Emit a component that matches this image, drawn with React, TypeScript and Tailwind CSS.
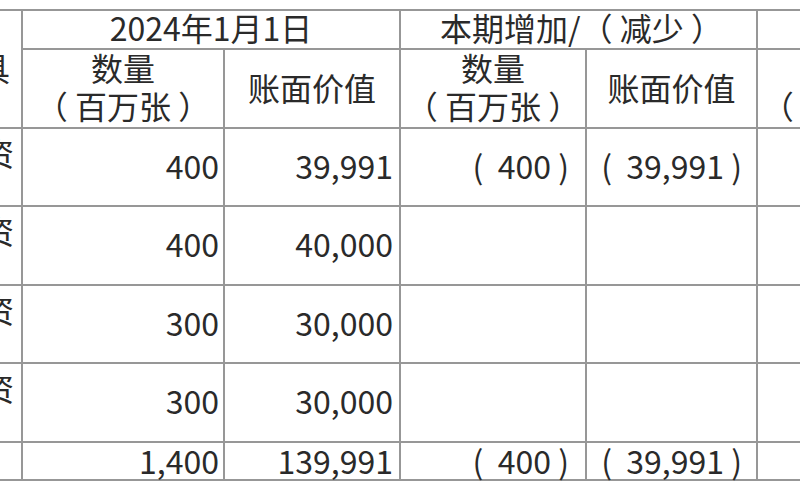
const rows = [
  { label: "永续中票投资", qty: "400", value: "39,991", dQty: "(  400 )", dValue: "(  39,991 )" },
  { label: "永续公司债投资", qty: "400", value: "40,000", dQty: "", dValue: "" },
  { label: "二级资本债投资", qty: "300", value: "30,000", dQty: "", dValue: "" },
  { label: "次级债投资", qty: "300", value: "30,000", dQty: "", dValue: "" },
];

const cell = "bg-white flex items-center";

function QtyHead() {
  return (
    <div className={`${cell} flex-col justify-center pb-[5px]`}>
      <span>数量</span>
      <span className="whitespace-pre">（ 百万张 ）</span>
    </div>
  );
}

export default function App() {
  return (
    <div
      className="w-[800px] h-[500px] overflow-hidden bg-white text-[#2a2a2a] text-[32px] leading-[38px]"
      style={{ fontFamily: '"Noto Sans CJK SC", "Noto Sans", sans-serif' }}
    >
      <div className="mt-[9px] ml-[-239px] w-max grid grid-cols-[260px_200px_174px_184px_169px_182px_180px] grid-rows-[37px_77px_76px_77px_76px_77px_36px] gap-[2px] py-[2px] bg-[#979797]">
        {/* header */}
        <div className={`${cell} row-span-2 justify-end pr-[11px] pb-[4px]`}>金融工具</div>
        <div className={`${cell} col-span-2 justify-center pb-[5px]`}>2024年1月1日</div>
        <div className={`${cell} col-span-2 justify-center pb-[5px] pl-[6px] whitespace-pre`}>本期增加/（ 减少 ）</div>
        <div className={`${cell} col-span-2 justify-center pb-[5px]`}>2024年12月31日</div>

        <QtyHead />
        <div className={`${cell} justify-center pb-[4px]`}>账面价值</div>
        <QtyHead />
        <div className={`${cell} justify-center pb-[4px]`}>账面价值</div>
        <QtyHead />
        <div className={`${cell} justify-center pb-[4px]`}>账面价值</div>

        {/* body */}
        {rows.map((r) => (
          <div key={r.label} className="contents">
            <div className="bg-white flex justify-end items-start pt-[4px] pr-[7px]">{r.label}</div>
            <div className={`${cell} justify-end pr-[4px] pb-[5px]`}>{r.qty}</div>
            <div className={`${cell} justify-end pr-[6px] pb-[5px]`}>{r.value}</div>
            <div className={`${cell} justify-end pr-[16px] pb-[5px] whitespace-pre`}>{r.dQty}</div>
            <div className={`${cell} justify-end pr-[14px] pb-[5px] whitespace-pre`}>{r.dValue}</div>
            <div className={cell}></div>
            <div className={cell}></div>
          </div>
        ))}

        {/* total */}
        <div className={`${cell} justify-start pl-[20px]`}>合计</div>
        <div className={`${cell} justify-end pr-[4px] pb-[3px]`}>1,400</div>
        <div className={`${cell} justify-end pr-[6px] pb-[3px]`}>139,991</div>
        <div className={`${cell} justify-end pr-[16px] pb-[3px] whitespace-pre`}>(  400 )</div>
        <div className={`${cell} justify-end pr-[14px] pb-[3px] whitespace-pre`}>(  39,991 )</div>
        <div className={cell}></div>
        <div className={cell}></div>
      </div>
    </div>
  );
}
